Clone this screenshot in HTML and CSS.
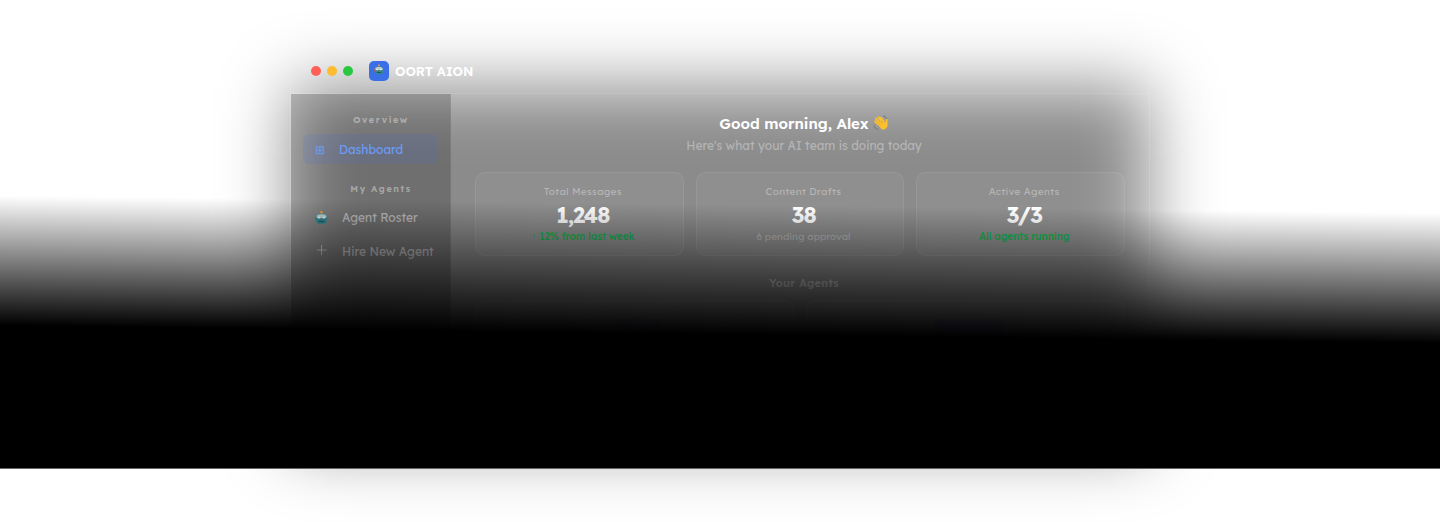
FILE: index.html
```
<!DOCTYPE html>
<html lang="en">

<head>
    <meta charset="UTF-8">
    <meta name="viewport" content="width=device-width, initial-scale=1.0">
    <title>OORT AION</title>
    <link rel="stylesheet" href="styles.css">
</head>

<body>
    <div class="hero">
        <div class="window">
            <div class="titlebar">
                <span class="dot red"></span>
                <span class="dot yellow"></span>
                <span class="dot green"></span>
                <span class="logo">
                    <svg width="10" height="11" viewBox="0 0 14 14">
                        <use href="#robot" />
                    </svg>
                </span>
                <span class="brand">OORT AION</span>
            </div>
            <div class="content">
                <div class="sidebar">
                    <div class="group">Overview</div>
                    <div class="nav active">
                        <span class="icon">⊞</span>
                        <span>Dashboard</span>
                    </div>
                    <div class="group second">My Agents</div>
                    <div class="nav">
                        <svg class="icon" width="13" height="13" viewBox="0 0 14 14">
                            <g id="robot">
                                <rect x="0" y="5.5" width="3" height="4.5" rx="1.3" fill="#a8625c" />
                                <rect x="11" y="5.5" width="3" height="4.5" rx="1.3" fill="#a8625c" />
                                <path d="M6.3 1h1.4v3h-1.4z" fill="#a87a35" />
                                <circle cx="7" cy="1.4" r="1.3" fill="#f0a030" />
                                <path d="M1.2 7q0-4 4-4h3.600q4 0 4 4v3q0 3.600-3.500 3.600h-4.600q-3.500 0-3.500-3.600z" fill="#2f8791" />
                                <path d="M1.500 6.500q.2-3 3.700-3h3.600q3.500 0 3.700 3l-1 1.200h-9z" fill="#b5cdd0" />
                                <circle cx="4.500" cy="7" r="1.200" fill="#e4f1f1" />
                                <circle cx="9.500" cy="7" r="1.200" fill="#e4f1f1" />
                                <circle cx="7" cy="8.600" r="1" fill="#a8564e" />
                                <path d="M4 10.600h6v1.300h-6z" fill="#1e5962" />
                            </g>
                        </svg>
                        <span>Agent Roster</span>
                    </div>
                    <div class="nav">
                        <svg class="icon plus" width="13" height="12" viewBox="0 0 13 12" fill="none" stroke="currentColor">
                            <path d="M6.500 0v10M2 5h9.500" />
                        </svg>
                        <span>Hire New Agent</span>
                    </div>
                </div>
                <div class="main">
                    <h1>
                        <span>Good morning, Alex</span>
                        <svg width="16" height="16" viewBox="0 0 16 16" fill="none" stroke-linecap="round">
                            <path d="M1 10.500q.5 3 3.500 4M10.500 1q2.500.3 3.200 2.500" stroke="#777" />
                            <path d="M5.500 9.500L2 6.300M7 8L3 3.500M9 6.800L5.500 2.200M10.500 6L8 2.800M12.500 9.500l1.300-4.500" stroke="#fbc02d" stroke-width="1.900" />
                            <path d="M4.500 8.500L10 5l2.500 3L14.500 7q.7 4.500-1.500 6.500-2.500 2-5 .2z" fill="#fbc02d" />
                            <path d="M5 8l2 2M6.500 6.500l2 2M8.500 5.500l1.500 2" stroke="#e08f1c" stroke-width=".5" />
                        </svg>
                    </h1>
                    <p class="sub">Here's what your AI team is doing today</p>
                    <div class="stats">
                        <div class="card">
                            <div class="label">Total Messages</div>
                            <div class="value">1,248</div>
                            <div class="note up">↑ 12% from last week</div>
                        </div>
                        <div class="card">
                            <div class="label">Content Drafts</div>
                            <div class="value">38</div>
                            <div class="note">6 pending approval</div>
                        </div>
                        <div class="card">
                            <div class="label">Active Agents</div>
                            <div class="value">3/3</div>
                            <div class="note up">All agents running</div>
                        </div>
                    </div>
                    <h2>Your Agents</h2>
                    <div class="agents">
                        <div class="agent"><span class="tag">Social</span></div>
                        <div class="agent"><span class="tag">Community</span></div>
                    </div>
                </div>
            </div>
        </div>
        <div class="fade"></div>
    </div>
</body>

</html>
```

FILE: styles.css
```
* {
    margin: 0;
    padding: 0;
    box-sizing: border-box;
}

body {
    background: #fff;
    font-family: Lexend, 'Open Sans', sans-serif;
    height: 522px;
    overflow: hidden;
}

.hero {
    position: relative;
    height: 522px;
    padding-top: 47px;
}

.window {
    position: relative;
    width: 860px;
    height: 380px;
    margin: 0 auto;
    border: 1px solid rgba(255, 255, 255, 0.12);
    border-radius: 16px;
}

/* soft shadow showing through the glass */
.window::before {
    content: '';
    position: absolute;
    z-index: -1;
    inset: 38px 0 -21px;
    background: rgba(0, 0, 0, 0.455);
    filter: blur(34px);
}

.titlebar {
    display: flex;
    align-items: center;
    height: 46px;
    padding-left: 20px;
    border-bottom: 1px solid rgba(255, 255, 255, 0.1);
}

.dot {
    width: 10px;
    height: 10px;
    margin-right: 6px;
    border-radius: 50%;
}

.red {
    background: #ff5f57;
}

.yellow {
    background: #febc2e;
}

.green {
    background: #28c840;
}

.logo {
    display: flex;
    align-items: center;
    justify-content: center;
    width: 20px;
    height: 20px;
    margin: 0 6px 0 10px;
    padding-bottom: 2px;
    border-radius: 5px;
    background: #3b6fe8;
}

.brand {
    color: #fff;
    font-size: 13px;
    font-weight: 600;
}

.content {
    display: flex;
    height: 332px;
}

.sidebar {
    width: 160px;
    padding: 18px 12px;
    background: rgba(0, 0, 0, 0.2);
    border-right: 1px solid rgba(255, 255, 255, 0.06);
}

.group {
    height: 16px;
    padding-left: 21px;
    color: rgba(255, 255, 255, 0.4);
    font-size: 9px;
    font-weight: 600;
    letter-spacing: 1.6px;
    line-height: 16px;
    text-align: center;
}

.second {
    margin: 17px 0 3px;
}

.nav {
    display: flex;
    align-items: center;
    height: 34px;
    padding-left: 12px;
    color: rgba(255, 255, 255, 0.52);
    font-size: 12px;
    white-space: nowrap;
}

.nav .icon {
    width: 13px;
    margin-right: 14px;
}

.active {
    height: 30px;
    margin-top: 6px;
    border-radius: 6px;
    background: rgba(59, 111, 232, 0.13);
    color: #6b9bf5;
}

.active .icon {
    width: 10px;
}

.main {
    flex: 1;
    padding: 19px 24px;
    text-align: center;
}

h1 {
    display: flex;
    align-items: center;
    justify-content: center;
    gap: 4px;
    height: 22px;
    padding-left: 8px;
    color: #fff;
    font-size: 15px;
    font-weight: 600;
    line-height: 22px;
}

h1 svg {
    margin-bottom: 3px;
}

.sub {
    height: 18px;
    margin-top: 2px;
    padding-left: 8px;
    color: rgba(255, 255, 255, 0.35);
    font-size: 12px;
    line-height: 18px;
}

.stats {
    display: grid;
    grid-template-columns: repeat(3, 1fr);
    gap: 12px;
    margin-top: 17px;
}

.card {
    height: 84px;
    padding: 11px 0 0 7px;
    border: 1px solid rgba(255, 255, 255, 0.07);
    border-radius: 10px;
    background: rgba(255, 255, 255, 0.04);
}

.label {
    color: rgba(255, 255, 255, 0.35);
    font-size: 10px;
    letter-spacing: 0.3px;
    line-height: 16px;
}

.value {
    color: #fff;
    font-size: 22px;
    font-weight: 700;
    letter-spacing: -1px;
    line-height: 30px;
}

.note {
    color: rgba(255, 255, 255, 0.33);
    font-size: 10px;
    line-height: 14px;
}

.up {
    color: #16b34f;
    font-weight: 500;
}

h2 {
    margin-top: 18px;
    padding-left: 8px;
    color: rgba(255, 255, 255, 0.5);
    font-size: 11px;
    font-weight: 600;
    letter-spacing: 0.3px;
    line-height: 18px;
}

.agents {
    display: grid;
    grid-template-columns: 1fr 1fr;
    gap: 12px;
    margin-top: 8px;
}

.agent {
    height: 90px;
    padding: 14px 0 0 8px;
    border: 1px solid rgba(255, 255, 255, 0.1);
    border-radius: 10px;
    background: rgba(255, 255, 255, 0.04);
}

.tag {
    padding: 2px 8px;
    border-radius: 4px;
    background: rgba(80, 80, 220, 0.2);
    color: #6b73d8;
    font-size: 10px;
}

/* page fade over the lower half of the window */
.fade {
    position: absolute;
    top: 0;
    left: 0;
    width: 100%;
    height: 469px;
    border-bottom: 1px solid #666;
    background: linear-gradient(180.7deg, transparent 213px, #000 343px);
}
```
